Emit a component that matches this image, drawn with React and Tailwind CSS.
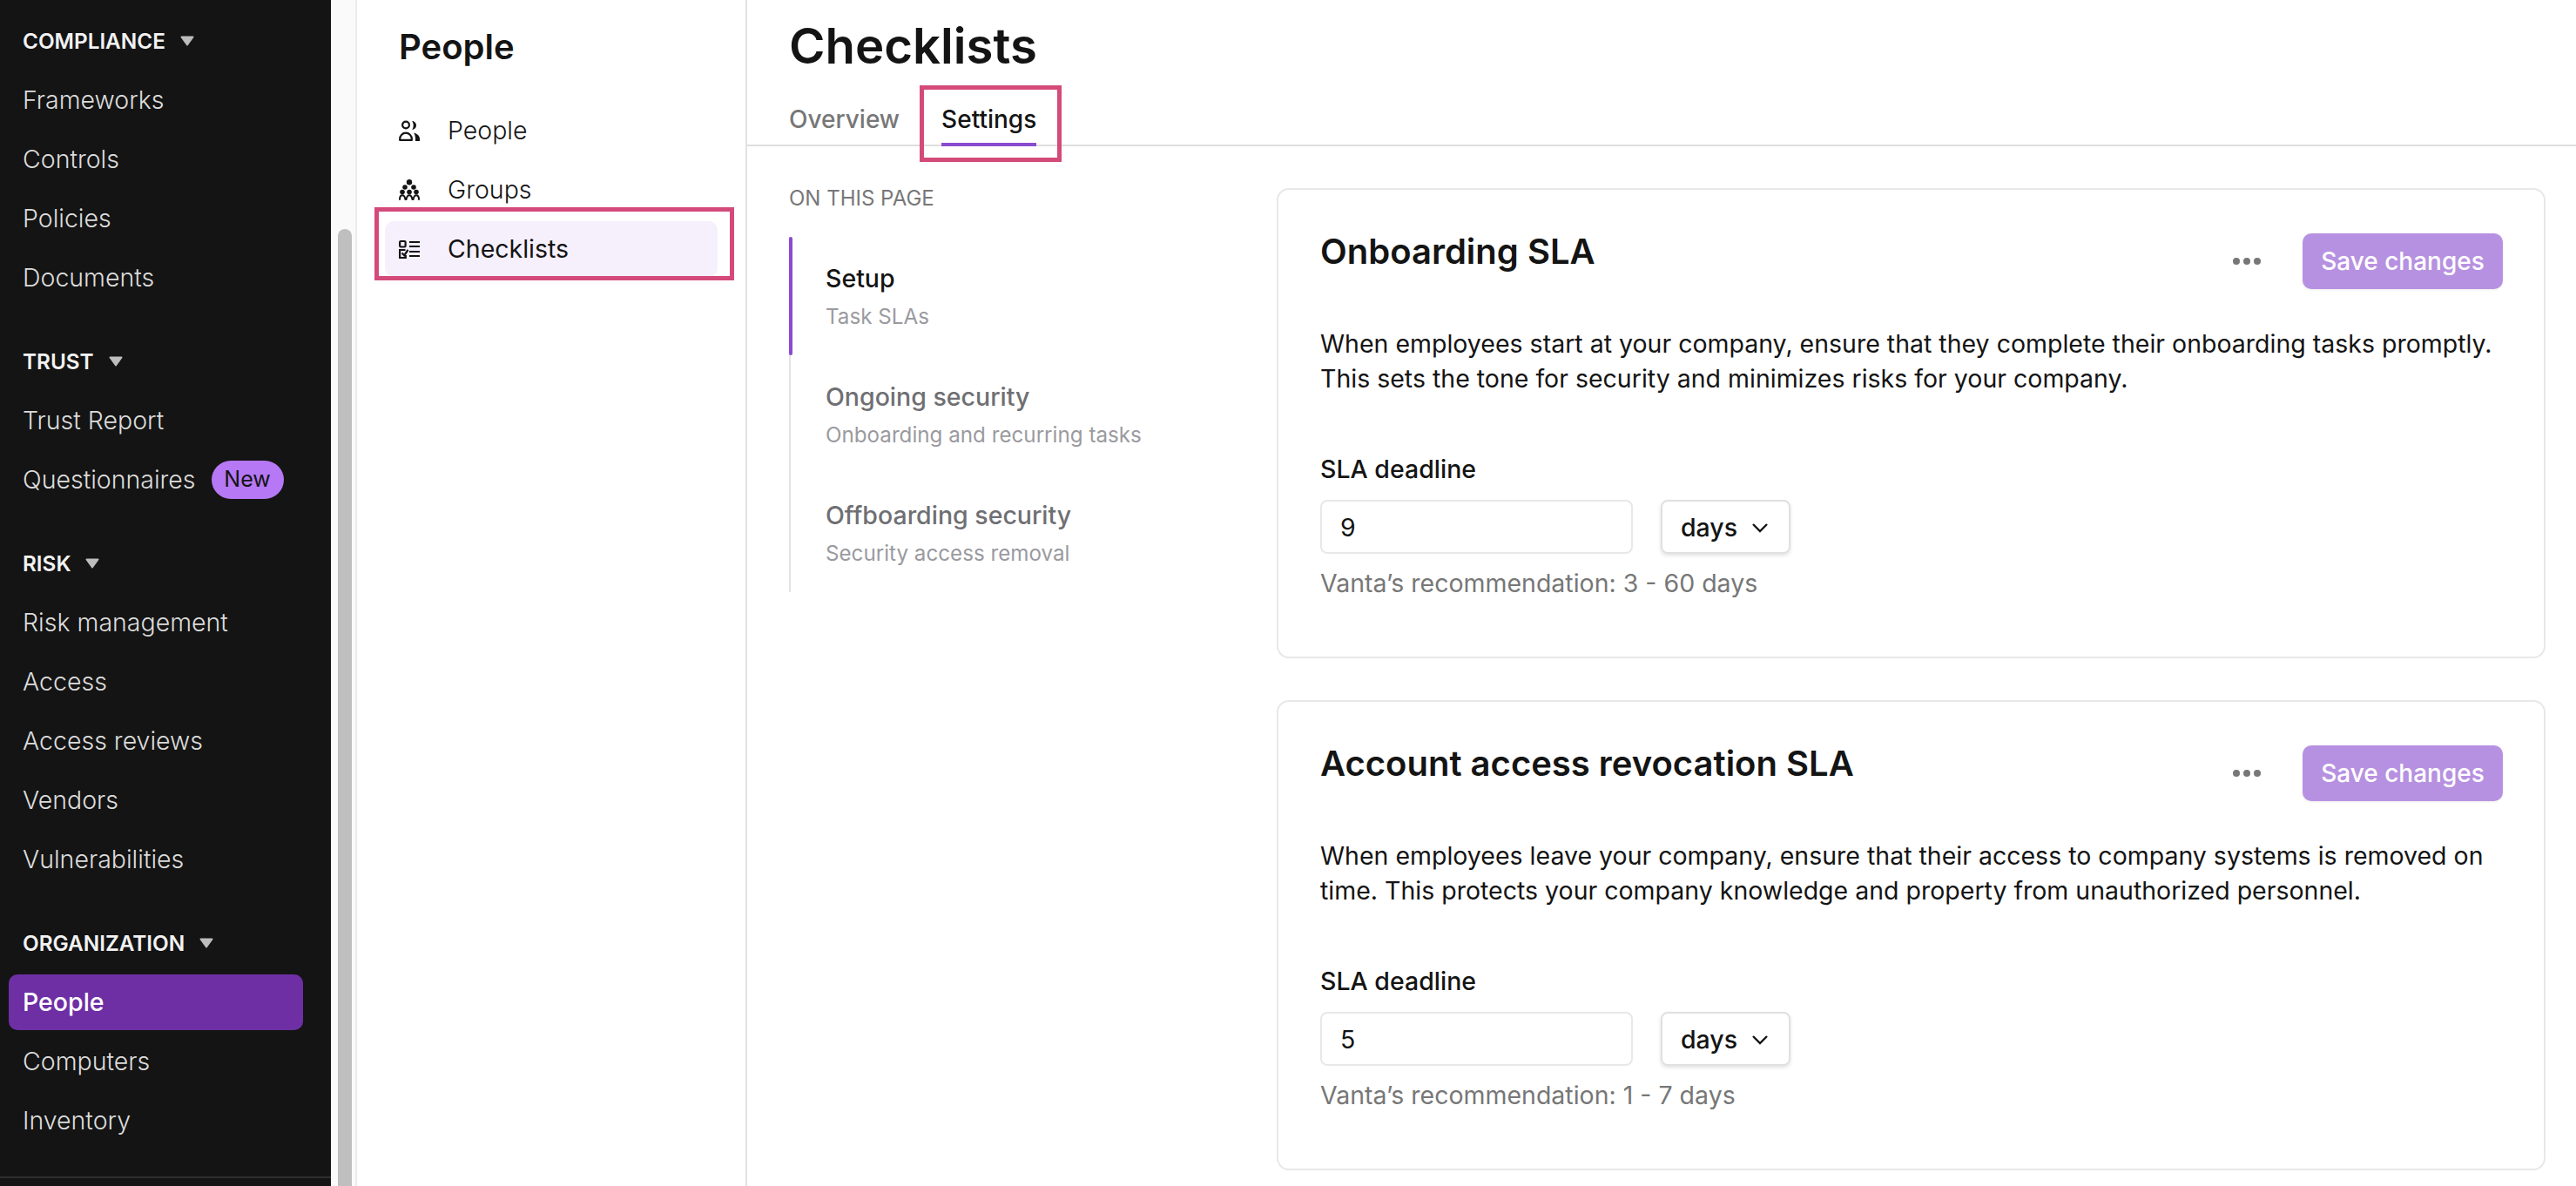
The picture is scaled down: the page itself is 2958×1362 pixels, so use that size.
import React from "react";

const font = { fontFamily: "Inter, sans-serif" };

function Caret() {
  return (
    <svg width="16" height="12" viewBox="0 0 16 12" className="block">
      <path d="M1.500 0.500h13a1 1 0 0 1 .8 1.600L8.800 11a1 1 0 0 1-1.600 0L.7 2.100A1 1 0 0 1 1.500 0.500z" fill="#bdbdbd" />
    </svg>
  );
}

function NavSection({ title, items }) {
  return (
    <div className="flex flex-col mb-[45px]">
      <div className="h-[28px] mt-[1px] mb-[22px] pl-[26px] flex items-center gap-[17px]">
        <span className="text-[24.300px] font-semibold text-[#f2f2f2]">{title}</span>
        <Caret />
      </div>
      {items.map((it) => (
        <div
          key={it.label}
          className={
            "h-[64px] mb-[4px] ml-[10px] w-[338px] rounded-[10px] pl-[16px] flex items-center text-[28.500px] " +
            (it.active ? "bg-[#6e2fa5] text-white font-medium" : "text-[#dcdcdc] font-light")
          }
        >
          <span>{it.label}</span>
          {it.badge && (
            <span className="ml-[18px] h-[44px] w-[83px] rounded-full bg-[#b678f5] text-[#141414] text-[25px] font-normal flex items-center justify-center">
              {it.badge}
            </span>
          )}
        </div>
      ))}
    </div>
  );
}

function PeopleIcon() {
  return (
    <svg width="24" height="24" viewBox="0 0 24 24" fill="none" className="block">
      <circle cx="8" cy="5.500" r="3.900" stroke="#141414" strokeWidth="2.200" />
      <path d="M15 1a5 5 0 0 1 5 5 5 5 0 0 1-5 5c1.200-1.400 1.700-3.200 1.700-5S16.200 2.400 15 1z" fill="#141414" />
      <path d="M1.200 22.900v-1.400a6.800 6.800 0 0 1 13.600 0v1.400z" stroke="#141414" strokeWidth="2.200" strokeLinejoin="round" />
      <path d="M17 14.500c4 .8 7 3.600 7 7v2.500h-5v-2.500c0-2.800-.7-5.200-2-7z" fill="#141414" />
    </svg>
  );
}

function GroupsIcon() {
  const heads = [[12, 3.300, 3.200], [7, 9, 2.800], [17, 9, 2.800], [4, 14.500, 2.800], [12, 14.500, 2.800], [20, 14.500, 2.800]];
  return (
    <svg width="24" height="24" viewBox="0 0 24 24" fill="#141414" className="block">
      {heads.map(([x, y, r], i) => (
        <circle key={i} cx={x} cy={y} r={r} />
      ))}
      <g fill="none" stroke="#141414" strokeWidth="2" strokeLinecap="round">
        <path d="M1 23c0-3 1-4.800 3-4.800S7 20 7.500 23" />
        <path d="M8.500 23c.5-3 1.500-4.800 3.500-4.800s3 1.800 3.500 4.800" />
        <path d="M16.500 23c.5-3 1.500-4.800 3.500-4.800s3 1.800 3 4.800" />
      </g>
    </svg>
  );
}

function ChecklistIcon() {
  return (
    <svg width="24" height="24" viewBox="0 0 24 24" fill="none" stroke="#141414" strokeWidth="2.200" className="block">
      <rect x="1.100" y="3" width="6.500" height="6.500" rx="1.200" />
      <path d="M12 4h12M12 9h12M12 15h12M12 20h12" />
      <path d="M7.500 13H1.100v9h6.700v-3" />
      <path d="M3.500 16.500l2.700 2.700L10.500 13" />
    </svg>
  );
}

function SubNavItem({ icon, label, active }) {
  return (
    <div
      className={
        "h-[64px] mb-[4px] mx-[32px] rounded-[10px] flex items-center pl-[16px] text-[28.500px] " +
        (active ? "bg-[#f6f0fc] font-normal" : "font-light")
      }
    >
      <span className="w-[56px] shrink-0">{icon}</span>
      <span className="text-[#141414]">{label}</span>
    </div>
  );
}

function PageLink({ title, sub, active }) {
  return (
    <div className="h-[136px] relative pl-[40px] pt-[30px] whitespace-nowrap">
      {active && <div className="absolute left-[-2px] top-0 bottom-0 w-[4px] rounded-[2px] bg-[#8a4bd0]" />}
      <div className={"text-[28.500px] leading-[36px] font-medium " + (active ? "text-[#141414]" : "text-[#6f6f73]")}>{title}</div>
      <div className="text-[24.200px] leading-[32px] mt-[10px] text-[#9a9aa0]">{sub}</div>
    </div>
  );
}

function SlaCard({ title, line1, line2, value, rec }) {
  return (
    <div className="w-[1457px] h-[540px] border-2 border-[#e8e8e8] rounded-[14px] bg-white pl-[48px] pr-[47px] shrink-0">
      <div className="flex items-start justify-between pt-[50px] h-[150px]">
        <h2 className="text-[40px] leading-[42px] font-semibold text-[#141414]">{title}</h2>
        <div className="flex items-center gap-[48px]">
          <div className="flex items-center gap-[4px]">
            <span className="w-[8px] h-[8px] rounded-full bg-[#777777]" />
            <span className="w-[8px] h-[8px] rounded-full bg-[#777777]" />
            <span className="w-[8px] h-[8px] rounded-full bg-[#777777]" />
          </div>
          <div className="w-[230px] h-[64px] rounded-[10px] bg-[#b791e1] text-white text-[28px] font-medium flex items-center justify-center shadow-[0_1px_3px_rgba(0,0,0,0.08)]">
            Save changes
          </div>
        </div>
      </div>
      <div className="mt-[7px] text-[28.500px] leading-[40px] text-[#141414] whitespace-nowrap">
        <div>{line1}</div>
        <div>{line2}</div>
      </div>
      <div className="mt-[66px] text-[28.500px] leading-[36px] font-medium text-[#141414]">SLA deadline</div>
      <div className="mt-[17px] flex gap-[32px]">
        <div className="w-[359px] h-[62px] border-2 border-[#e8e8e8] rounded-[8px] pl-[21px] pt-[2px] flex items-center text-[28.500px] text-[#141414]">
          {value}
        </div>
        <div className="w-[149px] h-[62px] border-2 border-[#e0e0e0] rounded-[8px] shadow-[0_2px_4px_rgba(0,0,0,0.12)] pl-[21px] pt-[2px] flex items-center text-[28.500px] font-medium text-[#141414] gap-[16px]">
          days
          <svg width="20" height="12" viewBox="0 0 20 12" fill="none" stroke="#141414" strokeWidth="2.400" className="block">
            <path d="M2 2l8 8 8-8" />
          </svg>
        </div>
      </div>
      <div className="mt-[16px] text-[28.500px] leading-[36px] text-[#777777]">{rec}</div>
    </div>
  );
}

export default function App() {
  return (
    <div style={font} className="relative w-[2958px] h-[1362px] flex overflow-hidden bg-white text-[#141414]">
      {/* Global nav */}
      <aside className="w-[380px] shrink-0 h-full bg-[#141414] relative pt-[32px] overflow-hidden">
        <NavSection title="COMPLIANCE" items={[{ label: "Frameworks" }, { label: "Controls" }, { label: "Policies" }, { label: "Documents" }]} />
        <NavSection title="TRUST" items={[{ label: "Trust Report" }, { label: "Questionnaires", badge: "New" }]} />
        <NavSection title="RISK" items={[{ label: "Risk management" }, { label: "Access" }, { label: "Access reviews" }, { label: "Vendors" }, { label: "Vulnerabilities" }]} />
        <NavSection title="ORGANIZATION" items={[{ label: "People", active: true }, { label: "Computers" }, { label: "Inventory" }]} />
        <div className="absolute left-0 right-0 top-[1351px] h-[2px] bg-[#2e2e2e]" />
      </aside>

      {/* Scrollbar */}
      <div className="w-[30px] shrink-0 h-full bg-[#fafafa] border-r-2 border-[#ebebeb] pl-[8px] pt-[263px]">
        <div className="w-[16px] h-full rounded-t-full bg-[#bfbfbf]" />
      </div>

      {/* Sub nav */}
      <nav className="w-[448px] shrink-0 h-full border-r-2 border-[#e2e2e2]">
        <h2 className="pl-[48px] pt-[28px] h-[118px] text-[40px] leading-[52px] font-semibold text-[#141414]">People</h2>
        <SubNavItem icon={<PeopleIcon />} label="People" />
        <SubNavItem icon={<GroupsIcon />} label="Groups" />
        <SubNavItem icon={<ChecklistIcon />} label="Checklists" active />
      </nav>

      {/* Main */}
      <main className="flex-1 min-w-0 h-full flex flex-col">
        <header className="h-[168px] shrink-0 border-b-2 border-[#dedede] pl-[48px]">
          <h1 className="pt-[18px] text-[56.300px] leading-[70px] font-semibold text-[#141414]">Checklists</h1>
          <div className="flex gap-[48px] text-[28px] font-medium mt-[29px]">
            <span className="text-[#777777] leading-[40px]">Overview</span>
            <span className="relative text-[#141414] leading-[40px]">
              Settings
              <span className="absolute left-0 right-0 top-[47px] h-[4px] bg-[#8a4bd0]" />
            </span>
          </div>
        </header>
        <div className="flex-1 flex min-h-0 pl-[48px]">
          <div className="w-[560px] shrink-0 pt-[46px]">
            <div className="text-[24px] leading-[28px] text-[#777777]">ON THIS PAGE</div>
            <div className="mt-[30px] w-[340px] border-l-2 border-[#e4e4e6]">
              <PageLink active title="Setup" sub="Task SLAs" />
              <PageLink title="Ongoing security" sub="Onboarding and recurring tasks" />
              <PageLink title="Offboarding security" sub="Security access removal" />
            </div>
          </div>
          <div className="flex flex-col pt-[48px] gap-[48px]">
            <SlaCard
              title="Onboarding SLA"
              line1="When employees start at your company, ensure that they complete their onboarding tasks promptly."
              line2="This sets the tone for security and minimizes risks for your company."
              value="9"
              rec="Vanta’s recommendation: 3 - 60 days"
            />
            <SlaCard
              title="Account access revocation SLA"
              line1="When employees leave your company, ensure that their access to company systems is removed on"
              line2="time. This protects your company knowledge and property from unauthorized personnel."
              value="5"
              rec="Vanta’s recommendation: 1 - 7 days"
            />
          </div>
        </div>
      </main>

      {/* Annotation boxes */}
      <div className="absolute left-[430px] top-[238px] w-[413px] h-[84px] border-[5px] border-[#d44a7a]" />
      <div className="absolute left-[1056px] top-[98px] w-[163px] h-[88px] border-[5px] border-[#d44a7a]" />
    </div>
  );
}
